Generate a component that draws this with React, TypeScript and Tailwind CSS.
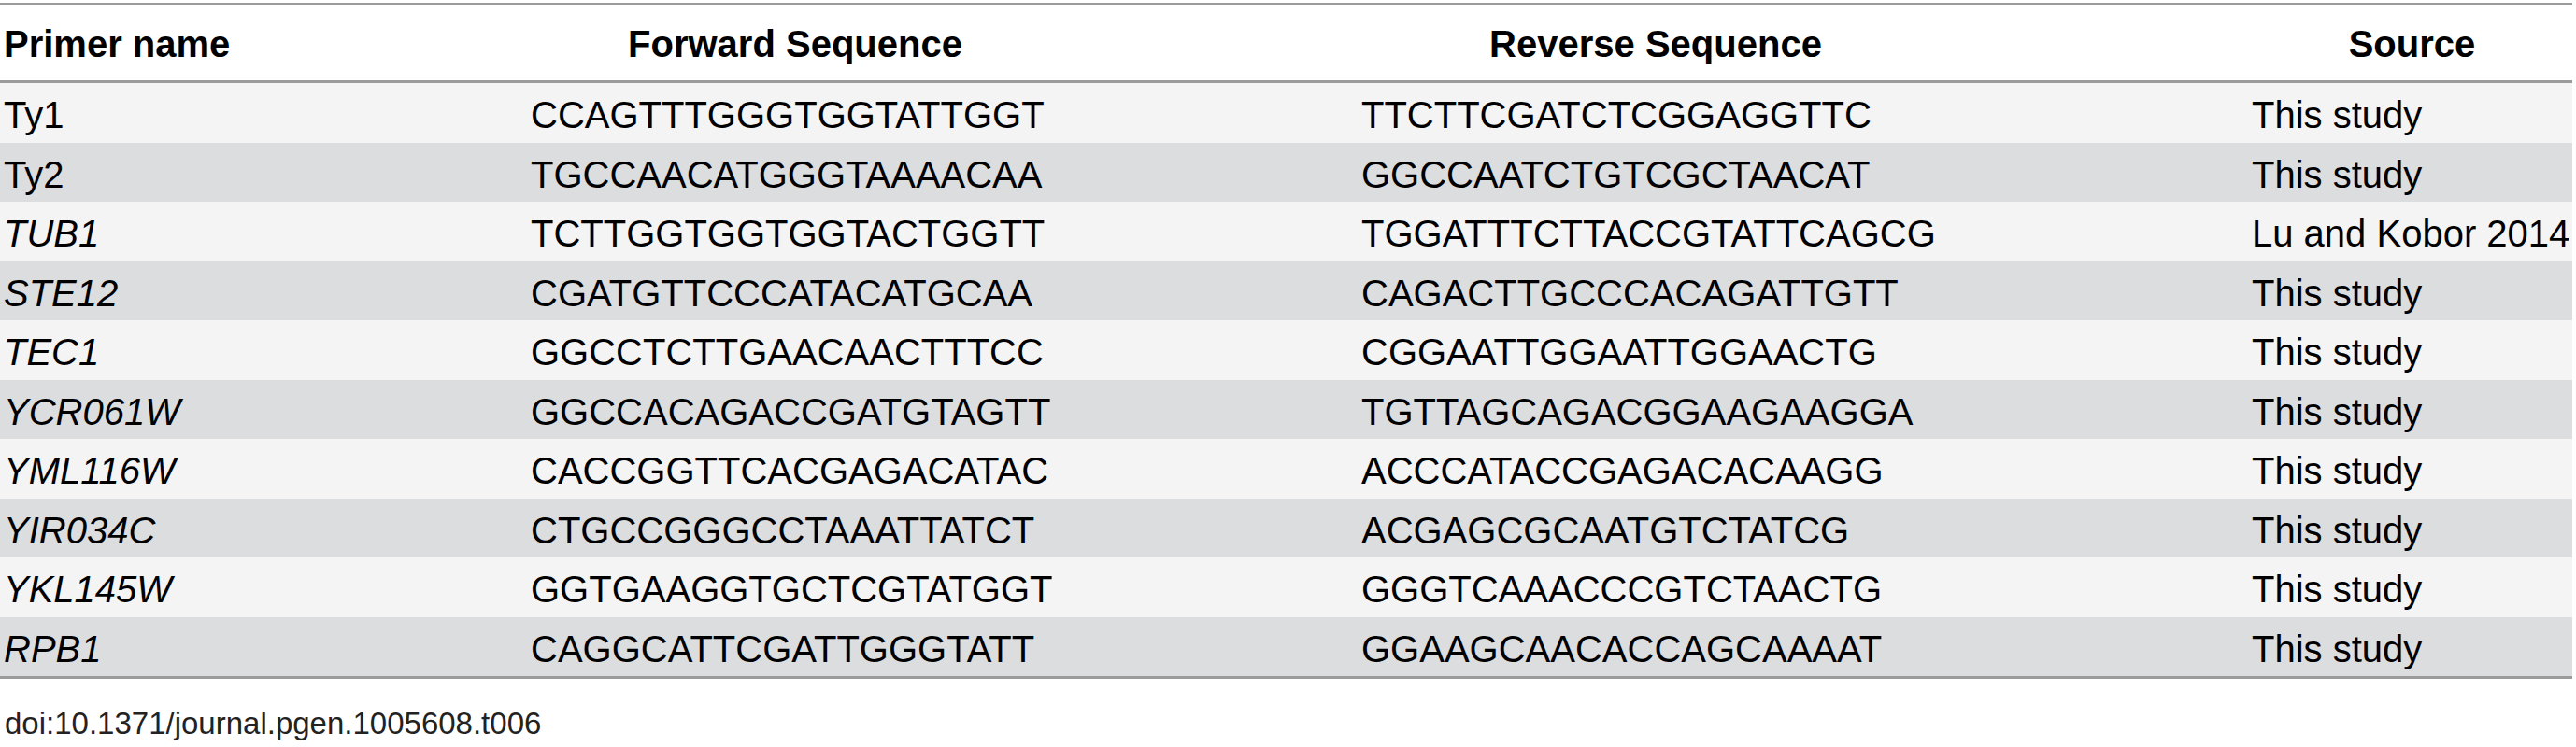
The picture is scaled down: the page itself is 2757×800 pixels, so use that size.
const primers = [
  { name: 'Ty1', italic: false, forward: 'CCAGTTTGGGTGGTATTGGT', reverse: 'TTCTTCGATCTCGGAGGTTC', source: 'This study' },
  { name: 'Ty2', italic: false, forward: 'TGCCAACATGGGTAAAACAA', reverse: 'GGCCAATCTGTCGCTAACAT', source: 'This study' },
  { name: 'TUB1', italic: true, forward: 'TCTTGGTGGTGGTACTGGTT', reverse: 'TGGATTTCTTACCGTATTCAGCG', source: 'Lu and Kobor 2014' },
  { name: 'STE12', italic: true, forward: 'CGATGTTCCCATACATGCAA', reverse: 'CAGACTTGCCCACAGATTGTT', source: 'This study' },
  { name: 'TEC1', italic: true, forward: 'GGCCTCTTGAACAACTTTCC', reverse: 'CGGAATTGGAATTGGAACTG', source: 'This study' },
  { name: 'YCR061W', italic: true, forward: 'GGCCACAGACCGATGTAGTT', reverse: 'TGTTAGCAGACGGAAGAAGGA', source: 'This study' },
  { name: 'YML116W', italic: true, forward: 'CACCGGTTCACGAGACATAC', reverse: 'ACCCATACCGAGACACAAGG', source: 'This study' },
  { name: 'YIR034C', italic: true, forward: 'CTGCCGGGCCTAAATTATCT', reverse: 'ACGAGCGCAATGTCTATCG', source: 'This study' },
  { name: 'YKL145W', italic: true, forward: 'GGTGAAGGTGCTCGTATGGT', reverse: 'GGGTCAAACCCGTCTAACTG', source: 'This study' },
  { name: 'RPB1', italic: true, forward: 'CAGGCATTCGATTGGGTATT', reverse: 'GGAAGCAACACCAGCAAAAT', source: 'This study' },
]

// shared column layout: name | forward | reverse | source
const cols = 'grid grid-cols-[241px_566px_630px_343px] gap-x-[323px] pl-[4px] whitespace-nowrap'

export default function App() {
  return (
    <div className="w-[2757px] h-[800px] bg-white text-black font-['Liberation_Sans',Arial,sans-serif]">
      <div className="w-[2753px] pt-[3px]">
        {/* header */}
        <div className={`${cols} h-[86px] border-t-2 border-b-[3px] border-[#9b9b9b] items-center pt-[3px] text-[40px] leading-[46px] font-bold`}>
          <div>Primer name</div>
          <div className="text-center">Forward Sequence</div>
          <div className="text-center">Reverse Sequence</div>
          <div className="text-center">Source</div>
        </div>

        {/* body */}
        <div className="border-b-[3px] border-[#9b9b9b]">
          {primers.map((p, i) => (
            <div
              key={p.name}
              className={`${cols} h-[63.5px] items-center pt-[5px] text-[40px] leading-[46px] ${
                i % 2 === 0 ? 'bg-[#f4f4f4]' : 'bg-[#dcdddf]'
              }`}
            >
              <div className={p.italic ? 'italic' : ''}>{p.name}</div>
              <div>{p.forward}</div>
              <div>{p.reverse}</div>
              <div>{p.source}</div>
            </div>
          ))}
        </div>
      </div>

      <p className="mt-[31px] pl-[5px] text-[33px] leading-[33px] text-[#222]">doi:10.1371/journal.pgen.1005608.t006</p>
    </div>
  )
}
